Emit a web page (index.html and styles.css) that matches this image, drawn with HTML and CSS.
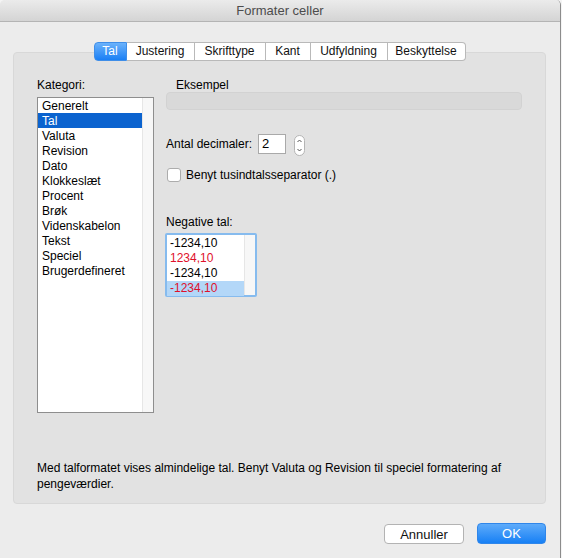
FILE: index.html
```html
<!DOCTYPE html>
<html>
<head>
    <title>Formater celler</title>
    <link rel="stylesheet" href="styles.css">
</head>
<body>
    <div class="window">
        <div class="titlebar">Formater celler</div>

        <div class="content">
            <div class="tabbox">
                <div class="tabs">
                    <div class="tab tab-tal active">Tal</div>
                    <div class="tab tab-justering">Justering</div>
                    <div class="tab tab-skrifttype">Skrifttype</div>
                    <div class="tab tab-kant">Kant</div>
                    <div class="tab tab-udfyldning">Udfyldning</div>
                    <div class="tab tab-beskyttelse">Beskyttelse</div>
                </div>

                <div class="panel">
                    <div class="columns">
                        <div class="left-col">
                            <div class="label">Kategori:</div>
                            <div class="listbox category-list">
                                <div class="list-items">
                                    <div class="item">Generelt</div>
                                    <div class="item selected">Tal</div>
                                    <div class="item">Valuta</div>
                                    <div class="item">Revision</div>
                                    <div class="item">Dato</div>
                                    <div class="item">Klokkeslæt</div>
                                    <div class="item">Procent</div>
                                    <div class="item">Brøk</div>
                                    <div class="item">Videnskabelon</div>
                                    <div class="item">Tekst</div>
                                    <div class="item">Speciel</div>
                                    <div class="item">Brugerdefineret</div>
                                </div>
                                <div class="scroll-track"></div>
                            </div>
                        </div>

                        <div class="right-col">
                            <div class="label sample-label">Eksempel</div>
                            <div class="sample-field"></div>

                            <div class="decimal-row">
                                <span>Antal decimaler:</span>
                                <div class="number-input">2</div>
                                <div class="stepper">
                                    <svg width="11" height="21" viewBox="0 0 11 21">
                                        <rect x="0.5" y="0.5" width="10" height="20" rx="5" fill="#fff" stroke="#b4b4b4"/>
                                        <path d="M3.5 7 L5.5 5 L7.5 7" fill="none" stroke="#555" stroke-width="1"/>
                                        <path d="M3.5 14 L5.5 16 L7.5 14" fill="none" stroke="#555" stroke-width="1"/>
                                    </svg>
                                </div>
                            </div>

                            <div class="check-row">
                                <div class="checkbox"></div>
                                <span>Benyt tusindtalsseparator (.)</span>
                            </div>

                            <div class="label negative-label">Negative tal:</div>
                            <div class="negative-list">
                                <div class="list-items">
                                    <div class="item">-1234,10</div>
                                    <div class="item red">1234,10</div>
                                    <div class="item">-1234,10</div>
                                    <div class="item red picked">-1234,10</div>
                                </div>
                                <div class="scroll-track"></div>
                            </div>
                        </div>
                    </div>

                    <p class="description">Med talformatet vises almindelige tal. Benyt Valuta og Revision til speciel formatering af pengeværdier.</p>
                </div>
            </div>

            <div class="buttons">
                <button class="btn">Annuller</button>
                <button class="btn primary">OK</button>
            </div>
        </div>
    </div>
</body>
</html>
```

FILE: styles.css
```css
* {
    margin: 0;
    padding: 0;
    box-sizing: border-box;
    font-family: "Liberation Sans", Arial, sans-serif;
}

body {
    width: 562px;
    height: 558px;
    background: #f4f4f4;
    font-size: 12px;
    color: #000;
    overflow: hidden;
}

.window {
    width: 561px;
    height: 558px;
    background: #ececec;
    border-right: 1px solid #8c8c8c;
    border-radius: 5px 5px 0 0;
    overflow: hidden;
}

.titlebar {
    height: 22px;
    line-height: 21px;
    text-align: center;
    font-size: 13px;
    color: #4c4c4c;
    background: linear-gradient(#ebebeb, #d4d4d4);
    border-bottom: 1px solid #b4b4b4;
}

.content {
    padding: 20px 0 0 13px;
}

.tabbox {
    width: 533px;
}

.tabs {
    display: flex;
    justify-content: center;
    height: 19px;
    position: relative;
    z-index: 1;
}

.tab {
    background: #fff;
    border: 1px solid #b9b9b9;
    border-left: none;
    text-align: center;
    line-height: 17px;
    color: #111;
}

.tab:first-child {
    border-left: 1px solid #b9b9b9;
    border-radius: 4px 0 0 4px;
}

.tab:last-child {
    border-radius: 0 4px 4px 0;
}

.tab-tal { width: 33px; }
.tab-justering { width: 68px; }
.tab-skrifttype { width: 71px; }
.tab-kant { width: 45px; }
.tab-udfyldning { width: 77px; }
.tab-beskyttelse { width: 78px; }

.tab.active {
    background: linear-gradient(#6bb2fb, #1a7ff5);
    border-color: #3f8ee8;
    color: #fff;
}

.panel {
    margin-top: -9px;
    height: 452px;
    background: #e2e2e2;
    border: 1px solid #d8d8d8;
    border-radius: 4px;
    padding: 24px 0 0 23px;
}

.columns {
    display: flex;
    gap: 12px;
}

.label {
    line-height: 16px;
    height: 16px;
}

.listbox {
    display: flex;
    background: #fff;
    border: 1px solid #8e8e8e;
}

.category-list {
    width: 117px;
    height: 316px;
    margin-top: 4px;
}

.list-items {
    flex: 1;
}

.item {
    height: 15px;
    line-height: 16px;
    padding-left: 4px;
    white-space: nowrap;
}

.item.selected {
    background: #0b63cf;
    color: #fff;
}

.scroll-track {
    width: 11px;
    background: #f7f7f7;
    border-left: 1px solid #e6e6e6;
}

.right-col {
    width: 356px;
}

.sample-label {
    padding-left: 10px;
}

.sample-field {
    height: 18px;
    margin-top: -1px;
    background: #d9d9d9;
    border: 1px solid #d2d2d2;
    border-radius: 4px;
}

.decimal-row {
    display: flex;
    align-items: center;
    margin-top: 24px;
    height: 20px;
}

.number-input {
    width: 28px;
    height: 20px;
    margin-left: 6px;
    background: #fff;
    border: 1px solid #a9a9a9;
    padding-left: 3px;
    font-size: 13px;
    line-height: 17px;
}

.stepper {
    margin-left: 8px;
    height: 21px;
    margin-top: 2px;
}

.check-row {
    display: flex;
    align-items: center;
    gap: 5px;
    margin-top: 14px;
    height: 14px;
    padding-left: 1px;
}

.checkbox {
    width: 14px;
    height: 14px;
    background: #fff;
    border: 1px solid #acacac;
    border-radius: 3px;
}

.negative-label {
    margin-top: 32px;
}

.negative-list {
    display: flex;
    width: 92px;
    height: 64px;
    margin-top: 3px;
    margin-left: -1px;
    background: #fff;
    border: 2px solid #86bbee;
    border-radius: 2px;
    padding-top: 1px;
}

.negative-list .item {
    padding-left: 3px;
    line-height: 15px;
}

.negative-list .scroll-track {
    width: 11px;
    margin-top: -1px;
}

.item.red {
    color: #e0102a;
}

.item.picked {
    background: #b3d7f8;
}

.description {
    margin-top: 47px;
    width: 475px;
    line-height: 16px;
}

.buttons {
    display: flex;
    justify-content: flex-end;
    gap: 13px;
    width: 533px;
    margin-top: 20px;
}

.btn {
    width: 80px;
    height: 20px;
    font-size: 13px;
    background: #fff;
    border: 1px solid #b3b3b3;
    border-radius: 4px;
    color: #111;
}

.btn.primary {
    width: 69px;
    height: 21px;
    margin-top: -1px;
    background: linear-gradient(#5eabfa, #1780f5);
    border-color: #2f86ea;
    color: #fff;
}
```
